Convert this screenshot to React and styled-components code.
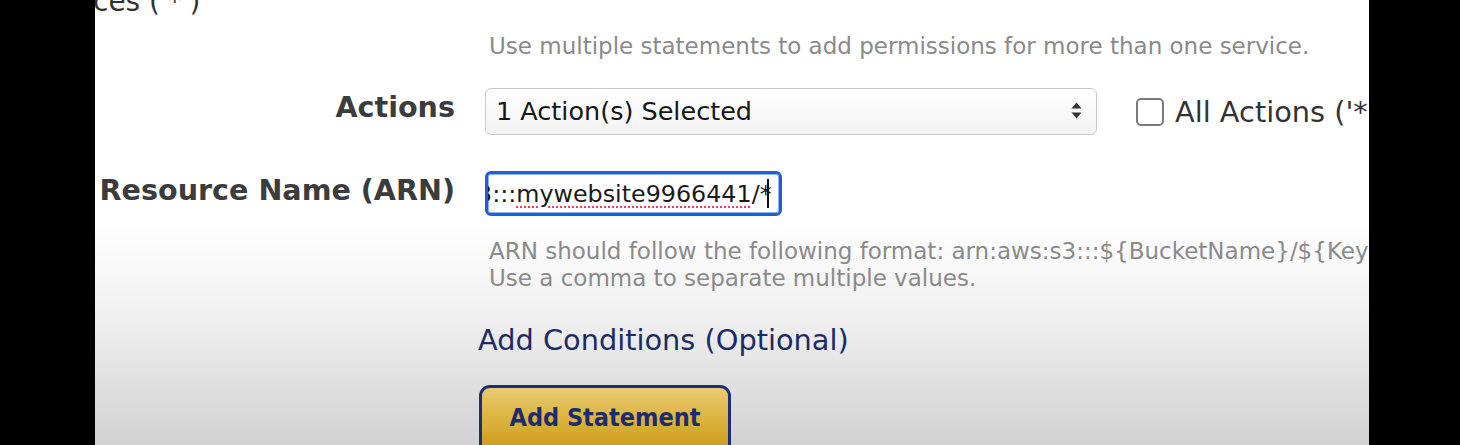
import React from "react";
import styled, { createGlobalStyle } from "styled-components";

const GlobalStyle = createGlobalStyle`
  html, body {
    margin: 0;
    padding: 0;
    background: #000;
  }
  body {
    font-family: "DejaVu Sans", Verdana, sans-serif;
  }
`;

const Screen = styled.div`
  width: 1460px;
  height: 445px;
  background: #000;
  display: flex;
  overflow: hidden;
`;

const Frame = styled.div`
  margin-left: 95px;
  width: 1274px;
  height: 445px;
  flex-shrink: 0;
  overflow: hidden;
  background: linear-gradient(
    to bottom,
    #ffffff 0px,
    #ffffff 225px,
    #efefef 320px,
    #d2d2d2 445px
  );
`;

const CutLine = styled.div`
  margin-top: -12px;
  margin-left: -2px;
  font-size: 28px;
  line-height: 28px;
  color: #333;
  white-space: nowrap;
`;

const Row = styled.div`
  display: grid;
  grid-template-columns: 360px 1fr;
  column-gap: 30px;
  align-items: start;
  margin-top: ${(p) => p.top}px;
`;

const Label = styled.div`
  text-align: right;
  font-weight: bold;
  font-size: 28.6px;
  line-height: 32px;
  color: #3c3c3c;
  padding-top: 3px;
  white-space: nowrap;
`;

const Field = styled.div`
  display: flex;
  align-items: center;
  min-width: 0;
  white-space: nowrap;
`;

const Hint = styled.div`
  padding-left: 4px;
  font-size: 23px;
  line-height: 27px;
  color: #8a8a8a;
  white-space: nowrap;
`;

const Select = styled.div`
  box-sizing: border-box;
  flex-shrink: 0;
  width: 612px;
  height: 47px;
  border: 1px solid #c9c9c9;
  border-radius: 6px;
  background: linear-gradient(to bottom, #ffffff, #f3f3f3);
  display: flex;
  align-items: center;
  justify-content: space-between;
  padding: 0 14px 2px 10px;
  font-size: 25.5px;
  line-height: 30px;
  color: #161616;
`;

const Check = styled.span`
  box-sizing: border-box;
  width: 28px;
  height: 28px;
  border: 2px solid #7a7a7a;
  border-radius: 5px;
  background: #fff;
  margin-left: 39px;
  margin-right: 11px;
  flex-shrink: 0;
`;

const CheckText = styled.span`
  flex-shrink: 0;
  font-size: 28.8px;
  line-height: 32px;
  color: #333;
`;

const InputBox = styled.div`
  box-sizing: border-box;
  flex-shrink: 0;
  width: 297px;
  height: 45px;
  border: 3px solid #1f60d6;
  border-radius: 6px;
  box-shadow: inset 0 0 0 1px #8fb3ee;
  background: #fff;
  overflow: hidden;
  display: flex;
  align-items: center;
  font-size: 23.8px;
  line-height: 30px;
  color: #1a1a1a;
`;

const InputText = styled.span`
  margin-left: -11px;
  display: flex;
  align-items: center;
`;

const Misspelled = styled.span`
  text-decoration: underline dotted #e0465a;
  text-decoration-thickness: 2px;
  text-underline-offset: 5px;
`;

const Caret = styled.span`
  display: inline-block;
  width: 2px;
  height: 29px;
  background: #111;
  margin-left: -5px;
`;

const Link = styled.a`
  display: block;
  margin-left: -7px;
  font-size: 28.8px;
  line-height: 34px;
  color: #1b2a68;
  text-decoration: none;
  white-space: nowrap;
`;

const Button = styled.button`
  box-sizing: border-box;
  flex-shrink: 0;
  margin-left: -6px;
  width: 252px;
  height: 72px;
  border: 3px solid #1d2d7a;
  border-radius: 11px;
  background: linear-gradient(to bottom, #e9cb72 0%, #dcb440 45%, #c89a14 100%);
  font-family: "DejaVu Sans Condensed", "DejaVu Sans", sans-serif;
  font-weight: bold;
  font-size: 25px;
  line-height: 30px;
  color: #1c2c6e;
  padding: 15px 0 0;
  display: flex;
  align-items: flex-start;
  justify-content: center;
`;

const SortArrows = () => (
  <svg width="11" height="17" viewBox="0 0 11 17">
    <path d="M5.5 0.5 L10.5 6.5 L0.5 6.5 Z" fill="#333" />
    <path d="M5.5 16.5 L10.5 10.5 L0.5 10.5 Z" fill="#333" />
  </svg>
);

const App = () => {
  return (
    <>
      <GlobalStyle />
      <Screen>
        <Frame>
          <CutLine>ces ('*')</CutLine>

          <Row top={17}>
            <div />
            <Hint>Use multiple statements to add permissions for more than one service.</Hint>
          </Row>

          <Row top={28}>
            <Label>Actions</Label>
            <Field>
              <Select>
                <span>1 Action(s) Selected</span>
                <SortArrows />
              </Select>
              <Check />
              <CheckText>All Actions ('*')</CheckText>
            </Field>
          </Row>

          <Row top={36}>
            <Label>Resource Name (ARN)</Label>
            <Field>
              <InputBox>
                <InputText>
                  3:::<Misspelled>mywebsite9966441</Misspelled>/*
                  <Caret />
                </InputText>
              </InputBox>
            </Field>
          </Row>

          <Row top={22}>
            <div />
            <Hint>
              ARN should follow the following format: arn:aws:s3:::${"{"}BucketName{"}"}/${"{"}KeyName{"}"}.
              <br />
              Use a comma to separate multiple values.
            </Hint>
          </Row>

          <Row top={31}>
            <div />
            <Link>Add Conditions (Optional)</Link>
          </Row>

          <Row top={28}>
            <div />
            <Field>
              <Button>Add Statement</Button>
            </Field>
          </Row>
        </Frame>
      </Screen>
    </>
  );
};

export default App;
